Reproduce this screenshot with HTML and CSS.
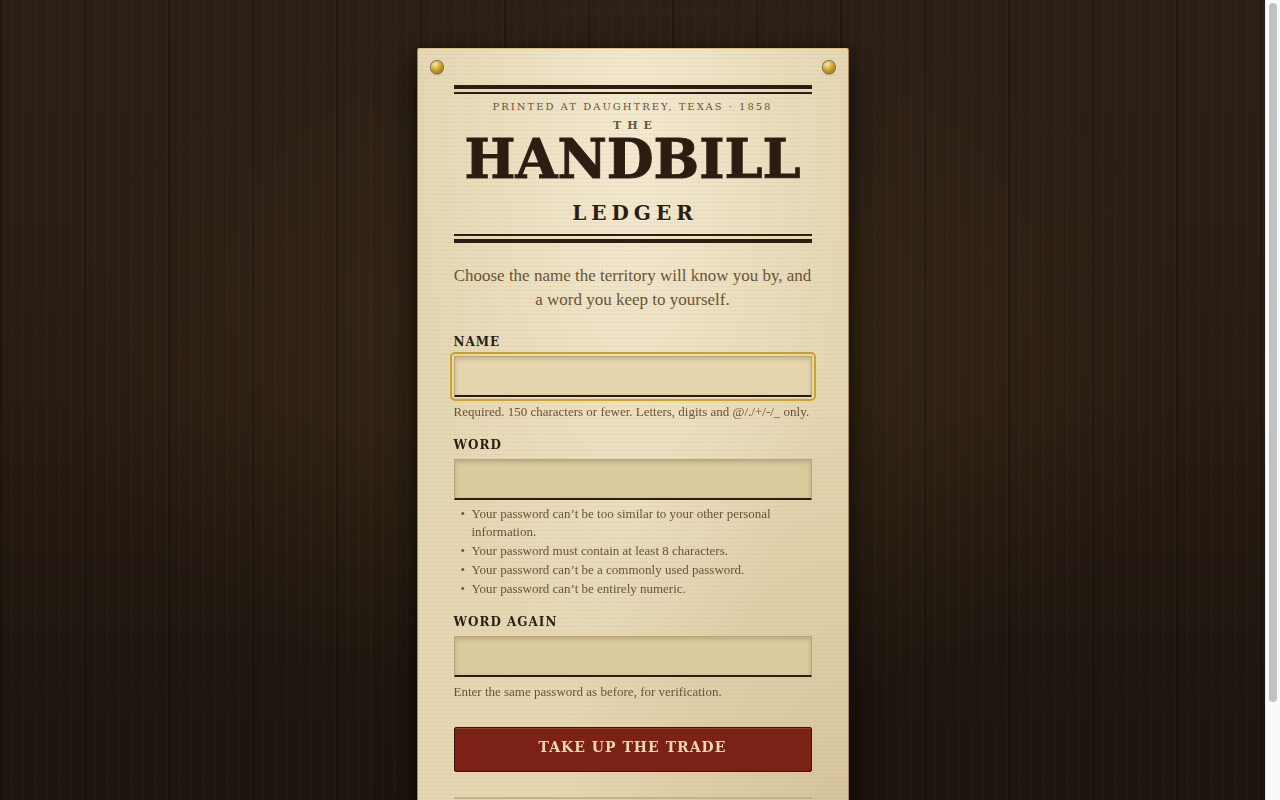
FILE: index.html
```html
<!DOCTYPE html>
<html lang="en">
<head>
<meta charset="utf-8">
<meta name="viewport" content="width=device-width, initial-scale=1">
<title>The Handbill Ledger</title>
<link rel="stylesheet" href="styles.css">
</head>
<body>
<div class="shell">
  <div class="wall">
    <main class="bill">
      <span class="tack tack-left"></span>
      <span class="tack tack-right"></span>
      <header class="masthead">
        <p class="imprint">Printed at Daughtrey, Texas · 1858</p>
        <h1 class="title">
          <span class="title-the">The</span>
          <span class="title-main">Handbill</span>
          <span class="title-sub">Ledger</span>
        </h1>
      </header>
      <p class="lede">Choose the name the territory will know you by, and a word you keep to yourself.</p>
      <form class="form">
        <div class="field">
          <label class="label" for="name">Name</label>
          <input class="input" id="name" type="text" autofocus aria-describedby="name-help">
          <p class="help" id="name-help">Required. 150 characters or fewer. Letters, digits and @/./+/-/_ only.</p>
        </div>
        <div class="field">
          <label class="label" for="word">Word</label>
          <input class="input" id="word" type="password" aria-describedby="word-help">
          <ul class="help rules" id="word-help">
            <li>Your password can’t be too similar to your other personal information.</li>
            <li>Your password must contain at least 8 characters.</li>
            <li>Your password can’t be a commonly used password.</li>
            <li>Your password can’t be entirely numeric.</li>
          </ul>
        </div>
        <div class="field">
          <label class="label" for="again">Word again</label>
          <input class="input" id="again" type="password" aria-describedby="again-help">
          <p class="help" id="again-help">Enter the same password as before, for verification.</p>
        </div>
        <button class="submit" type="submit">Take up the trade</button>
      </form>
      <div class="foot"></div>
    </main>
  </div>
  <div class="track"><div class="thumb"></div></div>
</div>
</body>
</html>
```
FILE: styles.css
```css
:root {
  --ink: #2b1d12;
  --ink-soft: #6b5237;
  --brass: #c9a227;
  --slab: "DejaVu Serif", serif;
  --text: "Liberation Serif", serif;
}
* { box-sizing: border-box; margin: 0; padding: 0; }
.shell {
  display: grid;
  grid-template-columns: 1fr 15px;
  height: 100vh;
  overflow: hidden;
}
.wall {
  overflow: hidden;
  padding: 48px 16px;
  background:
    repeating-linear-gradient(90deg, rgba(0, 0, 0, .24) 0 2px, transparent 2px 84px),
    repeating-linear-gradient(90deg, transparent 0 10px, rgba(255, 220, 170, .04) 11px, transparent 12px 11px),
    radial-gradient(ellipse 46% 46% at 50% 44%, rgba(150, 130, 20, .12), transparent 100%),
    linear-gradient(#2b1f17, #281c13 50%, #1d150e 85%, #1c140e);
}
.bill {
  position: relative;
  max-width: 432px;
  min-height: 816px;
  margin: 0 auto;
  padding: 36px;
  border: 1px solid #a58c58;
  border-top-color: #d8bd7a;
  border-radius: 2px;
  background:
    repeating-linear-gradient(0deg, rgba(107, 82, 55, .05) 0 1px, transparent 1px 4px),
    repeating-linear-gradient(90deg, rgba(107, 82, 55, .03) 0 1px, transparent 1px 4px),
    radial-gradient(ellipse 50% 70% at 50% 10%, rgba(255, 250, 235, .55), transparent),
    radial-gradient(ellipse 70% 60% at 100% 100%, rgba(150, 110, 60, .2), transparent),
    #e6d8b3;
  background-clip: padding-box;
  box-shadow: 0 1px 0 #fff3 inset, 0 12px 36px rgba(0, 0, 0, .6), 0 2px 6px rgba(0, 0, 0, .5);
}
.tack {
  position: absolute;
  top: 12px;
  width: 12px;
  height: 12px;
  border-radius: 50%;
  background: radial-gradient(circle at 35% 30%, #fbe9a0, #c9a227 50%, #8a6a14);
  box-shadow: 0 0 0 1px #7d683a, 0 2px 2px rgba(0, 0, 0, .3);
}
.tack-left { left: 13px; }
.tack-right { right: 13px; }
.masthead {
  padding: 6px 0 14px;
  text-align: center;
  color: var(--ink);
  border-top: 4px solid var(--ink);
  border-bottom: 4px solid var(--ink);
  position: relative;
}
.masthead::before, .masthead::after {
  content: "";
  position: absolute;
  left: 0;
  right: 0;
  height: 2px;
  background: var(--ink);
}
.masthead::before { top: 3px; }
.masthead::after { bottom: 3px; }
.imprint {
  padding-top: 4px;
  font: 10px/16px var(--slab);
  letter-spacing: 2px;
  text-transform: uppercase;
  color: var(--ink-soft);
}
.title {
  display: flex;
  flex-direction: column;
  font-family: var(--slab);
  text-transform: uppercase;
  text-shadow: 0 1px 0 rgba(255, 250, 235, .7);
}
.title-the { font-size: 11px; line-height: 22px; letter-spacing: 6px; padding-left: 6px; color: var(--ink-soft); }
.title-main { font-size: 54px; line-height: 44px; -webkit-text-stroke: 1px var(--ink); }
.title-sub { font-size: 20px; line-height: 24px; letter-spacing: 5px; padding: 20px 0 0 5px; }
.lede {
  margin: 21px 0 22px;
  font: 17px/24px var(--text);
  text-align: center;
  color: var(--ink-soft);
}
.form { display: flex; flex-direction: column; gap: 16px; }
.label {
  display: block;
  margin-bottom: 6px;
  font: bold 12px/16px var(--slab);
  letter-spacing: 1px;
  text-transform: uppercase;
  color: var(--ink);
}
.input {
  display: block;
  width: 100%;
  height: 41px;
  padding: 8px 12px;
  border: 1px solid #b9a274;
  border-bottom: 2px solid var(--ink);
  border-radius: 1px;
  background: #dbca9e;
  box-shadow: inset 0 2px 4px rgba(43, 29, 18, .2);
  font: 17px/24px var(--text);
  color: var(--ink);
}
.input:focus {
  background: #e5d6ae;
  outline: 2px solid var(--brass);
  outline-offset: 2px;
}
.help {
  padding-top: 6px;
  font: 13px/18px var(--text);
  color: var(--ink-soft);
}
.rules { list-style: none; display: grid; gap: 1px; padding: 5px 0 0 18px; }
.rules li { position: relative; }
.rules li::before { content: "•"; position: absolute; left: -11px; }
.submit {
  height: 45px;
  margin-top: 10px;
  padding-bottom: 5px;
  border: 1px solid #35150d;
  border-radius: 2px;
  background: #7b2115;
  box-shadow: inset 0 1px 0 rgba(255, 200, 140, .2);
  font: bold 14px/20px var(--slab);
  letter-spacing: 1px;
  text-transform: uppercase;
  color: #ecd9b0;
}
.foot { margin-top: 25px; border-top: 2px solid #c6b085; }
.track {
  padding: 3px;
  background: #fafafa;
  border-left: 1px solid #e8e8e8;
}
.thumb { width: 8px; height: 88%; border-radius: 4px; background: #c1c1c1; }
```
